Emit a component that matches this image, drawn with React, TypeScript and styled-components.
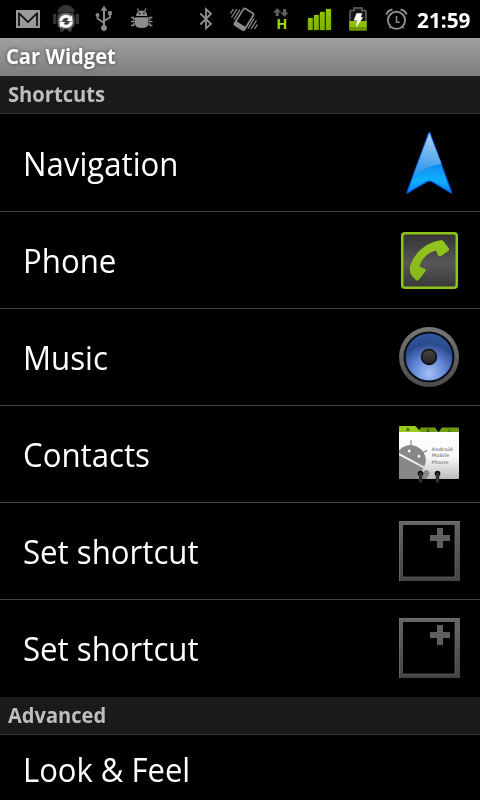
import React from 'react';
import styled, { createGlobalStyle } from 'styled-components';

const GlobalStyle = createGlobalStyle`
  html, body { margin: 0; background: #000; overflow: hidden; }
  body { font-family: 'Open Sans', 'Noto Sans', sans-serif; }
`;

const Screen = styled.main`
  display: flex;
  flex-direction: column;
  width: 480px;
  height: 800px;
  overflow: hidden;
  background: #000;
`;

const StatusBar = styled.header`
  display: flex;
  flex: none;
  height: 38px;
  padding: 0 9px;
  box-sizing: border-box;
`;

const StatusGroup = styled.div<{ $end?: boolean }>`
  display: flex;
  margin-left: ${p => (p.$end ? '26px' : '0')};
`;

const StatusSvg = styled.svg`
  flex: none;
  display: block;
  width: 38px;
  height: 38px;
`;

const Label = styled.span<{ $squeeze: number }>`
  display: block;
  white-space: nowrap;
  transform: scaleX(${p => p.$squeeze});
  transform-origin: left center;
`;

const Clock = styled(Label)`
  width: 56px;
  margin-left: 2px;
  font-size: 22px;
  font-weight: 700;
  line-height: 38px;
  color: #fff;
`;

const TitleBar = styled.div`
  flex: none;
  height: 38px;
  padding-left: 6px;
  line-height: 37px;
  font-size: 21px;
  font-weight: 700;
  color: #fff;
  text-shadow: 0 0 4px #444;
  background: linear-gradient(#a0a0a0, #7e7e7e);
`;

const SectionHeader = styled.h2`
  flex: none;
  box-sizing: border-box;
  height: 38px;
  margin: 0;
  padding-left: 8px;
  line-height: 37px;
  font-size: 21px;
  font-weight: 700;
  color: #bebebe;
  background: #1a1a1a;
  border-bottom: 1px solid #333;
`;

const List = styled.ul`
  flex: none;
  margin: 0;
  padding: 1px 0 0;
  list-style: none;
`;

const Row = styled.li`
  display: flex;
  align-items: center;
  justify-content: space-between;
  box-sizing: border-box;
  height: 97px;
  padding: 0 10px 0 23px;
  border-bottom: 1px solid #424242;
  &:last-child { border-bottom-color: #000; }
`;

const RowTitle = styled(Label)`
  font-size: 33px;
  line-height: 44px;
  color: #fff;
  padding-top: 1px;
`;

const RowIcon = styled.svg`
  flex: none;
  display: block;
  width: 80px;
  height: 80px;
`;

const Preference = styled.section`
  flex: none;
  padding: 12px 0 0 23px;
`;

const Summary = styled(Label)`
  margin-top: 1px;
  font-size: 20.5px;
  line-height: 28px;
  color: #2c2c2c;
`;

const GmailIcon = () => (
  <StatusSvg viewBox="0 0 38 38">
    <rect x="7" y="10" width="24" height="18" fill="#999" />
    <path d="M10 26V13.2L19 22l9-8.8V26" fill="none" stroke="#0a0a0a" strokeWidth="1.7" />
    <path d="M9 12h20" stroke="#999" strokeWidth="1" />
  </StatusSvg>
);

const SyncIcon = () => (
  <StatusSvg viewBox="0 0 38 38">
    <defs>
      <filter id="halo" x="-50%" y="-50%" width="200%" height="200%">
        <feGaussianBlur stdDeviation="1.300" />
      </filter>
      <filter id="soft" x="-20%" y="-20%" width="140%" height="140%">
        <feGaussianBlur stdDeviation=".5" />
      </filter>
    </defs>
    <g fill="#363636" filter="url(#soft)">
      <path d="M10.500 12.500a8.500 7.500 0 0 1 17 0z" />
      <rect x="10.500" y="13" width="17" height="14.500" rx="2" />
      <rect x="6" y="13.500" width="3.400" height="11" rx="1.700" />
      <rect x="28.600" y="13.500" width="3.400" height="11" rx="1.700" />
      <rect x="13" y="26" width="4" height="6" rx="2" />
      <rect x="21" y="26" width="4" height="6" rx="2" />
    </g>
    <circle cx="19" cy="21.300" r="5.500" fill="none" stroke="#fff" strokeWidth="4" filter="url(#halo)" opacity=".6" />
    <circle cx="19" cy="21.300" r="2.700" fill="#444" />
    <g fill="none" stroke="#fff" strokeWidth="2.800">
      <path d="M13.700 20.800a5.300 4.700 0 0 1 9.500-2.500" />
      <path d="M24.300 22a5.300 4.700 0 0 1-9.500 2.500" />
    </g>
    <path d="M25.200 15v6h-5.500zM12.800 28v-6h5.500z" fill="#fff" />
  </StatusSvg>
);

const UsbIcon = () => (
  <StatusSvg viewBox="0 0 38 38">
    <g fill="#8c8c8c" stroke="#8c8c8c">
      <path d="M19 28V10" strokeWidth="2" />
      <path d="M19 6l3 4.500h-6z" strokeWidth=".5" />
      <path d="M12.500 15v3.500l6.500 4.500M25 13v4.500L19 21" fill="none" strokeWidth="1.700" />
      <circle cx="12.500" cy="15" r="1.700" strokeWidth=".5" />
      <rect x="23.300" y="11.500" width="3.400" height="3.400" strokeWidth=".5" />
      <circle cx="19" cy="28" r="2.700" strokeWidth=".5" />
    </g>
  </StatusSvg>
);

const DebugIcon = () => (
  <StatusSvg viewBox="0 0 38 38">
    <g fill="#8c8c8c">
      <path d="M13 16a5.700 5.500 0 0 1 11.400 0z" />
      <path d="M12 17.200h13.400v6.300q0 4.500-6.700 4.500T12 23.500z" />
      <path d="M15.700 11.500L14.500 8.500M21.700 11.500L22.900 8.500" fill="none" stroke="#8c8c8c" strokeWidth="1.200" />
      <path d="M8 17.500h2.500v1.500H12M8 21.500H12M12 24h-1.500v1.500H8M29.400 17.500h-2.500v1.500H25.400M29.400 21.500H25.400M25.400 24h1.500v1.500H29.400" fill="none" stroke="#8c8c8c" strokeWidth="1.300" />
    </g>
    <circle cx="16.500" cy="13.500" r=".8" />
    <circle cx="20.900" cy="13.500" r=".8" />
  </StatusSvg>
);

const BluetoothIcon = () => (
  <StatusSvg viewBox="0 0 38 38">
    <path d="M13.300 13.500L24 24l-5 4.300V9.200l5 4.500L13.300 24.500" fill="none" stroke="#8c8c8c" strokeWidth="1.900" />
  </StatusSvg>
);

const VibrateIcon = () => (
  <StatusSvg viewBox="0 0 38 38">
    <g fill="none" stroke="#8c8c8c" strokeWidth="1.300">
      <g transform="rotate(32 19 19)">
        <rect x="13.300" y="9.500" width="11.700" height="19.500" rx="1.700" strokeWidth="1.700" />
        <path d="M14 25.500h10.500v3H14z" fill="#8c8c8c" />
      </g>
      <path d="M5.500 13.500L8.500 9M6.500 17.500L12 9M9 19.500L15 9.500M32.500 24.500L29.500 29M31.500 20.500L26 29M29 18.500L23 28.500" />
    </g>
  </StatusSvg>
);

const DataLabel = styled.text`
  font: 700 14.5px 'Open Sans', sans-serif;
  fill: #9fdb00;
`;

const DataIcon = () => (
  <StatusSvg viewBox="0 0 38 38">
    <path d="M14.300 8l4 4.500h-2.500V16h-3.200v-3.500H10zM21.500 17l4-4.500h-2.300V9H20v3.500h-2.500z" fill="#5e5e5e" />
    <DataLabel x="13.300" y="29">H</DataLabel>
  </StatusSvg>
);

const SignalIcon = () => (
  <StatusSvg viewBox="0 0 38 38">
    <defs>
      <linearGradient id="signal" x1="0" y1="0" x2="0" y2="1">
        <stop offset="0" stopColor="#92c800" />
        <stop offset="1" stopColor="#7cb000" />
      </linearGradient>
      <filter id="glow" x="-30%" y="-30%" width="160%" height="160%">
        <feGaussianBlur stdDeviation="1.200" />
      </filter>
    </defs>
    <path d="M7 18h5v12H7zM13 15h5v15h-5zM19 12h5v18h-5zM25 9h5v21h-5z" fill="#75aa00" filter="url(#glow)" opacity=".5" />
    <path d="M7 18h4.700v12H7zM13 15h4.700v15H13zM19 12h4.700v18H19zM25 9h5v21h-5z" fill="url(#signal)" />
  </StatusSvg>
);

const BatteryIcon = () => (
  <StatusSvg viewBox="0 0 38 38">
    <path d="M11 28V11.500q0-1 1-1h3V8h8v2.500h3q1 0 1 1V28" fill="#161616" stroke="#666" strokeWidth="1.500" />
    <rect x="10.300" y="21" width="17.400" height="9.500" rx="1" fill="#8cc002" />
    <rect x="10.300" y="27" width="17.400" height="3.500" rx="1" fill="#6b9600" />
    <path d="M17.500 13.300h5.700l-1.400 4h2.400L17 27.700l1.200-7.200h-3.500z" fill="#fff" />
  </StatusSvg>
);

const AlarmIcon = () => (
  <StatusSvg viewBox="0 0 38 38">
    <g fill="none" stroke="#8c8c8c">
      <circle cx="19.500" cy="20.300" r="8.600" strokeWidth="1.900" />
      <path d="M9.500 14.500q1-4 6-5M29.500 14.500q-1-4-6-5" strokeWidth="2.200" />
      <path d="M19.500 16v6.300h3.200" strokeWidth="1.500" />
      <path d="M13.500 26.500l-1 2M25.500 26.500l1 2" strokeWidth="1.500" />
    </g>
  </StatusSvg>
);

const NavigationIcon = () => (
  <RowIcon viewBox="0 0 80 80">
    <defs>
      <linearGradient id="nav" x1="0" y1="0" x2="0" y2="1">
        <stop offset="0" stopColor="#55a4e5" />
        <stop offset=".55" stopColor="#1090f2" />
        <stop offset=".8" stopColor="#0fb0ff" />
        <stop offset="1" stopColor="#087cff" />
      </linearGradient>
      <linearGradient id="navShine" x1=".5" y1="0" x2=".3" y2="1">
        <stop offset="0" stopColor="#d4e6f8" />
        <stop offset="1" stopColor="#3c96e6" />
      </linearGradient>
      <clipPath id="navClip"><path d="M39.300 12q.9 0 1.400 1.500L62 72q.5 2-1.500 1.200L42 62.200q-2.500-1.600-5 0L18 73.200q-2 .8-1.500-1L38 13.500q.5-1.500 1.300-1.500z" /></clipPath>
    </defs>
    <g transform="translate(0 -3)">
      <g clipPath="url(#navClip)">
        <path d="M39.300 12q.9 0 1.400 1.500L62 72q.5 2-1.500 1.200L42 62.200q-2.500-1.600-5 0L18 73.200q-2 .8-1.500-1L38 13.500q.5-1.500 1.300-1.500z" fill="url(#nav)" stroke="#0050d8" strokeWidth="2" />
        <path d="M39.300 13L23 56q12-9.500 28.500-12.500z" fill="url(#navShine)" opacity=".65" />
      </g>
    </g>
  </RowIcon>
);

const PhoneIcon = () => (
  <RowIcon viewBox="0 0 80 80">
    <defs>
      <linearGradient id="phone" x1="0" y1="0" x2="0" y2="1">
        <stop offset="0" stopColor="#333" />
        <stop offset=".55" stopColor="#575757" />
        <stop offset="1" stopColor="#383838" />
      </linearGradient>
      <linearGradient id="handset" x1="0" y1="0" x2="0" y2="1">
        <stop offset="0" stopColor="#94c51f" />
        <stop offset="1" stopColor="#86b918" />
      </linearGradient>
    </defs>
    <rect x="12.200" y="13.200" width="54.600" height="54.600" rx="2.800" fill="url(#phone)" stroke="#8fc31a" strokeWidth="2.500" />
    <path d="M49.500 20.500c2-.7 3.500-.3 4.400 1.300l4.800 6.500c.8 1 .6 2-.4 2.800l-7.400 5c-1.200.8-2.500.3-2.900-1L46 30.500C37 33 31 39.500 29.500 46.500l5.200 2.200c1.300.6 1.300 1.500.5 2.800l-6.300 8.300c-.8 1-1.900 1.200-3 .2C19.800 54.500 18.500 50 21 43.500 26 31.500 37 22.500 49.500 20.500z" fill="url(#handset)" />
  </RowIcon>
);

const MusicIcon = () => (
  <RowIcon viewBox="0 0 80 80">
    <defs>
      <linearGradient id="rim" x1="0" y1="0" x2="0" y2="1">
        <stop offset="0" stopColor="#777" />
        <stop offset="1" stopColor="#4b4b4b" />
      </linearGradient>
      <radialGradient id="cone" cx=".5" cy=".85" r=".85">
        <stop offset="0" stopColor="#a3bff5" />
        <stop offset=".4" stopColor="#6288d8" />
        <stop offset=".75" stopColor="#2a4a8d" />
        <stop offset="1" stopColor="#32579d" />
      </radialGradient>
      <linearGradient id="cap" x1="0" y1="0" x2="0" y2="1">
        <stop offset="0" stopColor="#484848" />
        <stop offset="1" stopColor="#202020" />
      </linearGradient>
    </defs>
    <circle cx="39" cy="40" r="30" fill="url(#rim)" />
    <circle cx="39" cy="40" r="25.500" fill="#080b12" />
    <circle cx="39" cy="40" r="23.500" fill="url(#cone)" />
    <circle cx="39" cy="40" r="7.500" fill="url(#cap)" stroke="#101010" strokeWidth="1.500" />
  </RowIcon>
);

const CardText = styled.text`
  font: 700 4.8px 'DejaVu Sans', sans-serif;
  fill: #999;
`;

const TabText = styled.text`
  font: 700 4.5px 'DejaVu Sans', sans-serif;
  fill: #3a5c00;
`;

const ContactsIcon = () => (
  <RowIcon viewBox="0 -1 80 80">
    <defs>
      <linearGradient id="card" x1="0" y1="0" x2="0" y2="1">
        <stop offset="0" stopColor="#fff" />
        <stop offset=".55" stopColor="#f8f8f8" />
        <stop offset="1" stopColor="#bababa" />
      </linearGradient>
      <clipPath id="cardClip"><rect x="9" y="17" width="60" height="47" /></clipPath>
    </defs>
    <path d="M48 18l4-5.500h16q1 0 1 1V18z" fill="#719d12" />
    <path d="M27 18l4-5.500h14l4 5.500z" fill="#719d12" />
    <path d="M9 18v-6q0-1 1-1h15.500l6 7z" fill="#9bcb1e" />
    <TabText x="16" y="15.500">A</TabText>
    <TabText x="36.500" y="17">B</TabText>
    <TabText x="58" y="17">C</TabText>
    <rect x="9" y="17" width="60" height="47" rx="1" fill="url(#card)" />
    <g clipPath="url(#cardClip)" fill="#888">
      <g transform="translate(21.500 43.500) rotate(28)">
        <path d="M-15 1a15 14 0 0 1 30 0z" />
        <path d="M-15 3h30v27h-30z" />
        <rect x="17" y="3" width="6" height="19" rx="3" />
        <path d="M-6.500-11l-2.500-5M7-10l3-4.500" stroke="#888" strokeWidth="1.200" />
        <circle cx="-5.500" cy="-5.500" r="1.400" fill="#fff" />
        <circle cx="5.500" cy="-5.500" r="1.400" fill="#fff" />
      </g>
    </g>
    <CardText x="41.500" y="35.500">Android</CardText>
    <CardText x="41.500" y="42">Mobile</CardText>
    <CardText x="41.500" y="48.500">Phone</CardText>
    <circle cx="30.500" cy="58.500" r="2.800" fill="#0a0a0a" />
    <circle cx="47.500" cy="58.500" r="2.800" fill="#0a0a0a" />
    <path d="M30.500 59v7M47.500 59v7" stroke="#303030" strokeWidth="3.500" strokeLinecap="round" />
  </RowIcon>
);

const AddIcon = () => (
  <RowIcon viewBox="0 1 80 80">
    <defs>
      <linearGradient id="frame" x1="0" y1="0" x2="0" y2="1">
        <stop offset="0" stopColor="#666" />
        <stop offset="1" stopColor="#444" />
      </linearGradient>
    </defs>
    <path d="M9 11h61v60H9zM13 15v52h52V15z" fillRule="evenodd" fill="url(#frame)" />
    <path d="M9.500 71V11.500H70M65 15v52H13" fill="none" stroke="#777" strokeWidth="1" opacity=".6" />
    <path d="M47 18h6v7h7v6h-7v7h-6v-7h-7v-6h7z" fill="#5f5f5f" />
  </RowIcon>
);

const shortcuts = [
  { title: 'Navigation', Icon: NavigationIcon },
  { title: 'Phone', Icon: PhoneIcon },
  { title: 'Music', Icon: MusicIcon },
  { title: 'Contacts', Icon: ContactsIcon },
  { title: 'Set shortcut', Icon: AddIcon },
  { title: 'Set shortcut', Icon: AddIcon },
];

export default function App() {
  return (
    <Screen>
      <GlobalStyle />
      <StatusBar>
        <StatusGroup>
          <GmailIcon />
          <SyncIcon />
          <UsbIcon />
          <DebugIcon />
        </StatusGroup>
        <StatusGroup $end>
          <BluetoothIcon />
          <VibrateIcon />
          <DataIcon />
          <SignalIcon />
          <BatteryIcon />
          <AlarmIcon />
        </StatusGroup>
        <Clock $squeeze={0.945}>21:59</Clock>
      </StatusBar>
      <TitleBar><Label $squeeze={0.96}>Car Widget</Label></TitleBar>
      <SectionHeader><Label $squeeze={0.96}>Shortcuts</Label></SectionHeader>
      <List>
        {shortcuts.map(({ title, Icon }, i) => (
          <Row key={i}>
            <RowTitle $squeeze={0.945}>{title}</RowTitle>
            <Icon />
          </Row>
        ))}
      </List>
      <SectionHeader><Label $squeeze={0.955}>Advanced</Label></SectionHeader>
      <Preference>
        <RowTitle $squeeze={0.94}>Look &amp; Feel</RowTitle>
        <Summary $squeeze={0.945}>Customize title, colors and font size</Summary>
      </Preference>
    </Screen>
  );
}
